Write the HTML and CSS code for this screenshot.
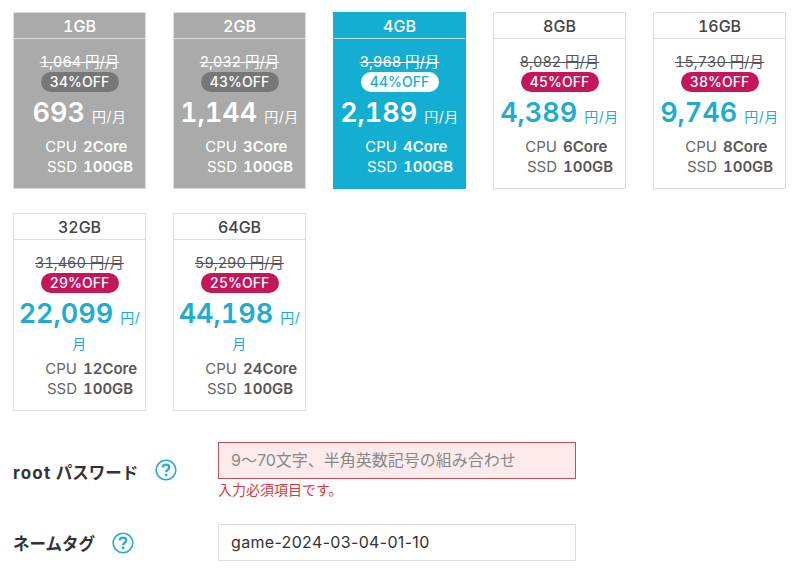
FILE: index.html
```html
<!DOCTYPE html>
<html lang="ja">

<head>
    <meta charset="UTF-8">
    <meta name="viewport" content="width=device-width, initial-scale=1.0">
    <title>プラン選択</title>
    <link rel="stylesheet" href="styles.css">
</head>

<body>
    <main>
        <div class="plans">
            <div class="plan off">
                <div class="plan-name">1GB</div>
                <div class="plan-body">
                    <div class="old-price">1,064 円/月</div>
                    <div class="discount">34%OFF</div>
                    <div class="price"><b>693</b> <span>円/月</span></div>
                    <dl class="spec"><dt>CPU</dt><dd>2Core</dd><dt>SSD</dt><dd>100GB</dd></dl>
                </div>
            </div>
            <div class="plan off">
                <div class="plan-name">2GB</div>
                <div class="plan-body">
                    <div class="old-price">2,032 円/月</div>
                    <div class="discount">43%OFF</div>
                    <div class="price"><b>1,144</b> <span>円/月</span></div>
                    <dl class="spec"><dt>CPU</dt><dd>3Core</dd><dt>SSD</dt><dd>100GB</dd></dl>
                </div>
            </div>
            <div class="plan selected">
                <div class="plan-name">4GB</div>
                <div class="plan-body">
                    <div class="old-price">3,968 円/月</div>
                    <div class="discount">44%OFF</div>
                    <div class="price"><b>2,189</b> <span>円/月</span></div>
                    <dl class="spec"><dt>CPU</dt><dd>4Core</dd><dt>SSD</dt><dd>100GB</dd></dl>
                </div>
            </div>
            <div class="plan">
                <div class="plan-name">8GB</div>
                <div class="plan-body">
                    <div class="old-price">8,082 円/月</div>
                    <div class="discount">45%OFF</div>
                    <div class="price"><b>4,389</b> <span>円/月</span></div>
                    <dl class="spec"><dt>CPU</dt><dd>6Core</dd><dt>SSD</dt><dd>100GB</dd></dl>
                </div>
            </div>
            <div class="plan">
                <div class="plan-name">16GB</div>
                <div class="plan-body">
                    <div class="old-price">15,730 円/月</div>
                    <div class="discount">38%OFF</div>
                    <div class="price"><b>9,746</b> <span>円/月</span></div>
                    <dl class="spec"><dt>CPU</dt><dd>8Core</dd><dt>SSD</dt><dd>100GB</dd></dl>
                </div>
            </div>
            <div class="plan">
                <div class="plan-name">32GB</div>
                <div class="plan-body">
                    <div class="old-price">31,460 円/月</div>
                    <div class="discount">29%OFF</div>
                    <div class="price wraps"><b>22,099</b> <span>円/</span><br><span class="wrapped">月</span></div>
                    <dl class="spec"><dt>CPU</dt><dd>12Core</dd><dt>SSD</dt><dd>100GB</dd></dl>
                </div>
            </div>
            <div class="plan">
                <div class="plan-name">64GB</div>
                <div class="plan-body">
                    <div class="old-price">59,290 円/月</div>
                    <div class="discount">25%OFF</div>
                    <div class="price wraps"><b>44,198</b> <span>円/</span><br><span class="wrapped">月</span></div>
                    <dl class="spec"><dt>CPU</dt><dd>24Core</dd><dt>SSD</dt><dd>100GB</dd></dl>
                </div>
            </div>
        </div>

        <div class="form-row password-row">
            <div class="form-label">
                <span class="label-text"><span class="latin">root</span> パスワード</span>
                <svg class="help" viewBox="0 0 22 22"><circle cx="11" cy="11" r="9.8"></circle><path d="M7.8 8.6c0-1.9 1.4-3 3.2-3s3.2 1.1 3.2 2.8c0 2.4-3.1 2.4-3.1 4.9"></path><circle class="dot" cx="11.1" cy="15.9" r="1.4"></circle></svg>
            </div>
            <div class="form-field">
                <div class="input error">9〜70文字、半角英数記号の組み合わせ</div>
                <div class="error-text">入力必須項目です。</div>
            </div>
        </div>

        <div class="form-row">
            <div class="form-label">
                <span class="label-text">ネームタグ</span>
                <svg class="help" viewBox="0 0 22 22"><circle cx="11" cy="11" r="9.8"></circle><path d="M7.8 8.6c0-1.9 1.4-3 3.2-3s3.2 1.1 3.2 2.8c0 2.4-3.1 2.4-3.1 4.9"></path><circle class="dot" cx="11.1" cy="15.9" r="1.4"></circle></svg>
            </div>
            <div class="form-field">
                <div class="input name-input">game-2024-03-04-01-10</div>
            </div>
        </div>
    </main>
</body>

</html>
```

FILE: styles.css
```css
html,
body {
    margin: 0px;
    padding: 0px;
}

body {
    background-color: white;
    color: #444444;
    font-family: Inter, "Noto Sans CJK JP", sans-serif;
    font-size: 15px;
    font-variant-numeric: tabular-nums;
    overflow: hidden;
}

main {
    padding: 12px 0px 0px 13px;
}

.plans {
    display: grid;
    grid-template-columns: repeat(5, 133px);
    column-gap: 27px;
    row-gap: 24px;
}

.plan {
    border: 1px solid #dddddd;
    box-sizing: border-box;
    padding-bottom: 11px;
    min-height: 177px;
}

.plan-name {
    height: 25px;
    line-height: 27px;
    text-align: center;
    font-size: 16px;
    font-weight: 500;
    border-bottom: 1px solid #dddddd;
}

.plan-body {
    padding-top: 12px;
    text-align: center;
}

.old-price {
    height: 21px;
    line-height: 22px;
    font-size: 14.5px;
    text-decoration: line-through;
    color: #555555;
}

.discount {
    width: 78px;
    height: 20px;
    margin: 0px auto;
    line-height: 20px;
    font-size: 14px;
    font-weight: 500;
    color: white;
    background-color: #c4165a;
    border-radius: 10px;
}

.price {
    margin: 2px -6px 0px;
    line-height: 20px;
    color: #20acd0;
    white-space: nowrap;
}

.price b {
    line-height: 38px;
    font-size: 27px;
    font-weight: 600;
}

.price span {
    margin-left: 3px;
    font-size: 14px;
    letter-spacing: 0.5px;
}

.price .wrapped {
    margin-left: 0px;
}

.wraps {
    line-height: 21px;
}

.spec {
    display: grid;
    grid-template-columns: 50px auto;
    column-gap: 6px;
    margin: 5px 0px 0px 13px;
    line-height: 20px;
    font-size: 15px;
    text-align: left;
}

.spec dt {
    text-align: right;
    color: #666666;
}

.spec dd {
    margin: 0px;
    font-weight: 600;
    color: #555555;
    white-space: nowrap;
}

.off {
    background-color: #aaaaaa;
    color: white;
}

.off .old-price,
.off .price,
.off .spec dt,
.off .spec dd,
.selected .old-price,
.selected .price,
.selected .spec dt,
.selected .spec dd {
    color: white;
}

.off .discount {
    background-color: #777777;
}

.selected {
    background-color: #14aed2;
    border-color: #14aed2;
    color: white;
}

.selected .plan-name {
    border-bottom-color: #bfeaf5;
}

.selected .discount {
    background-color: white;
    color: #14aed2;
}

.form-row {
    display: flex;
    align-items: center;
    margin-top: 26px;
}

.password-row {
    margin-top: 31px;
}

.form-label {
    display: flex;
    align-items: center;
    gap: 17px;
    width: 205px;
    font-size: 16.5px;
    font-weight: 700;
    color: #333333;
}

.password-row .label-text {
    padding-top: 3px;
}

.latin {
    font-size: 17px;
    letter-spacing: 1.2px;
}

.help {
    width: 22px;
    height: 22px;
}

.help circle {
    fill: none;
    stroke: #2aaccc;
    stroke-width: 1.6;
}

.help path {
    fill: none;
    stroke: #2aaccc;
    stroke-width: 2.4;
}

.help .dot {
    fill: #2aaccc;
    stroke: none;
}

.input {
    box-sizing: border-box;
    width: 358px;
    height: 37px;
    padding-left: 12px;
    line-height: 35px;
    font-size: 16px;
    font-variant-numeric: normal;
    color: #333333;
    border: 1px solid #dddddd;
}

.name-input {
    letter-spacing: 0.33px;
}

.error {
    background-color: #fdeaea;
    border-color: #c0505a;
    color: #888888;
}

.error-text {
    margin-top: 3px;
    line-height: 16px;
    font-size: 14px;
    color: #d9363e;
}
```
